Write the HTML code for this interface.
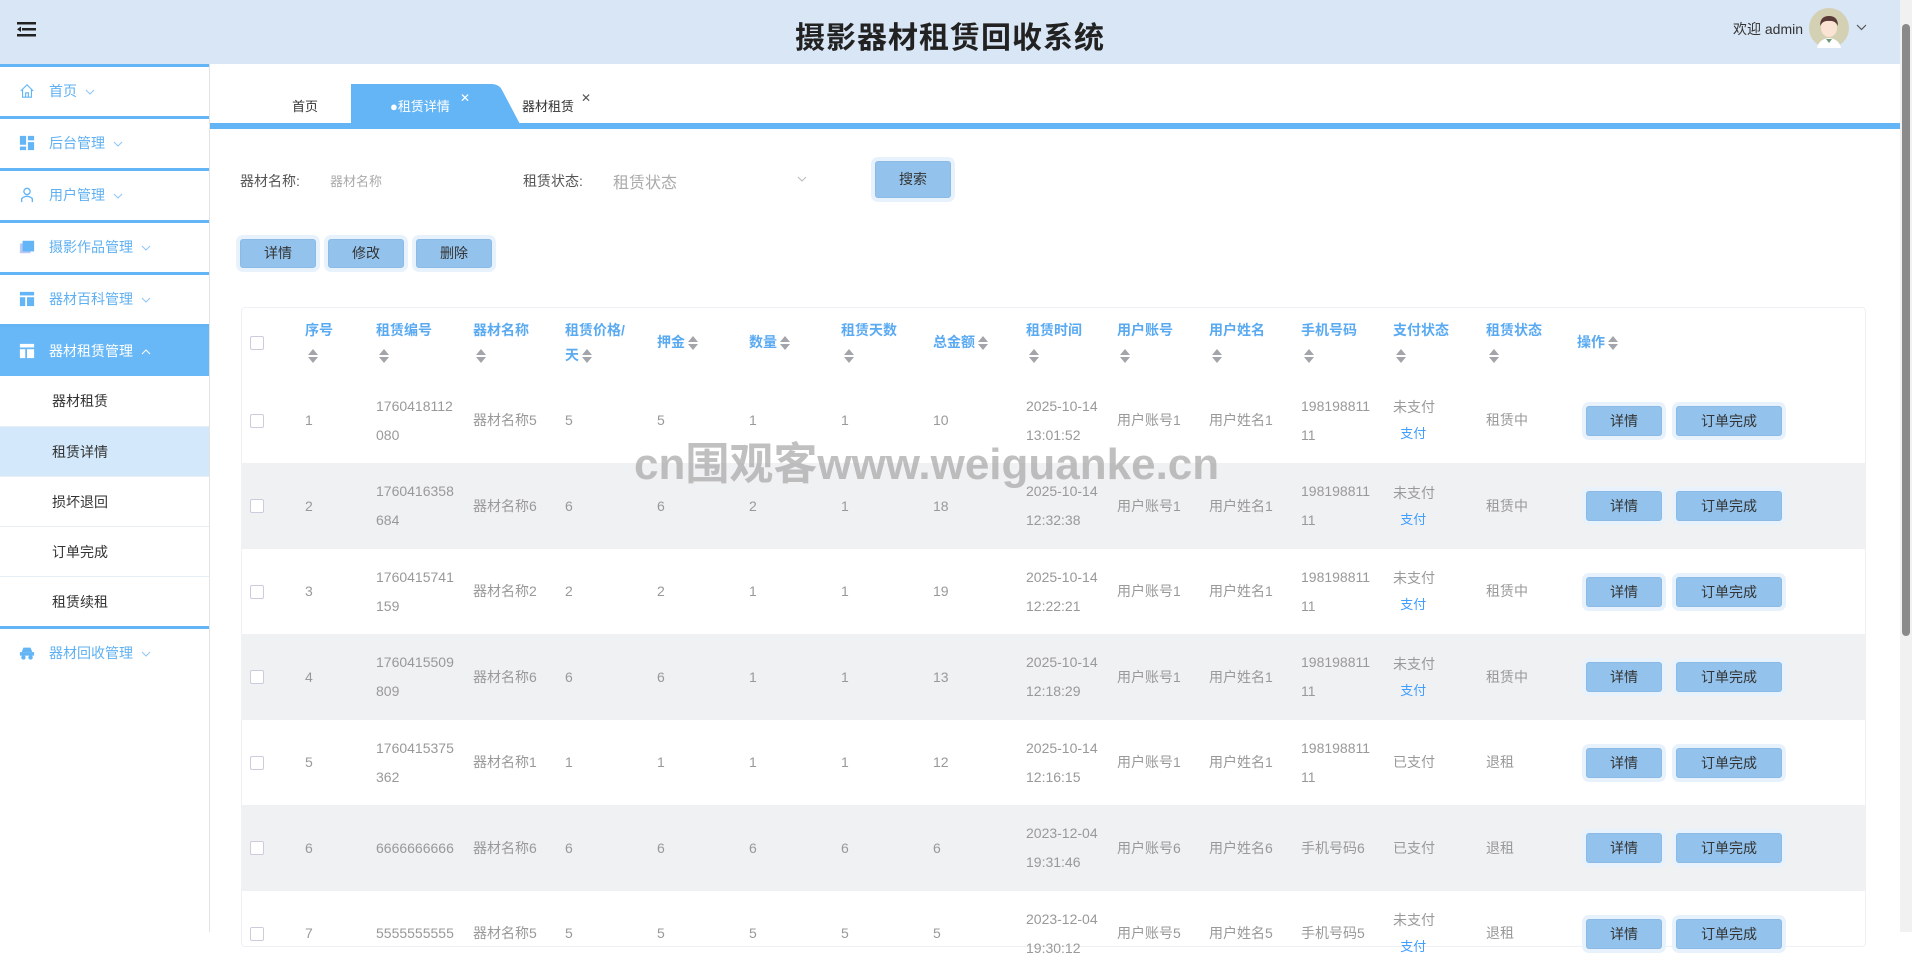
<!DOCTYPE html>
<html><head><meta charset="utf-8">
<style>
*{box-sizing:border-box;margin:0;padding:0}
body{width:1912px;height:932px;overflow:hidden;background:#fff;font-family:"Liberation Sans","Noto Sans CJK SC",sans-serif;position:relative;font-size:14px;color:#333}
.hdr{position:absolute;left:0;top:0;width:1900px;height:64px;background:#d9e6f6}
.title{position:absolute;left:0;width:1900px;top:13px;text-align:center;font-size:30px;font-weight:bold;color:#222;letter-spacing:1px}
.side{position:absolute;left:0;top:64px;width:210px;height:868px;border-right:1px solid #e3e3e3;background:#fff}
.mi{position:absolute;left:0;width:209px;height:52px;border-top:3px solid #64b5f6;color:#5fb0f2;font-size:14px;line-height:49px;padding-left:49px}
.mi .ic{position:absolute;left:18px;top:16px;width:18px;height:16px}
.chev{display:inline-block;margin-left:8px;vertical-align:middle}
.mi.act{background:#68b8f7;color:#fff}
.sub{position:absolute;left:0;width:209px;height:50px;border-top:1px solid #e6eef6;line-height:50px;padding-left:52px;font-size:14px;color:#333}
.bline{position:absolute;left:210px;top:123px;width:1690px;height:6px;background:#64b5f6}
.lbl{position:absolute;font-size:14px;color:#555}
.ph{position:absolute;font-size:14px;color:#aaa}
.btn{position:absolute;background:#93c3ec;border:1px solid #8bbbe5;box-shadow:0 0 0 4px #e8f2fc;border-radius:3px;text-align:center;color:#333;font-size:14px}
.card{position:absolute;left:241px;top:307px;width:1625px;height:640px;border:1px solid #eef0f4;border-radius:4px}
.row{position:absolute;left:241px;width:1625px;display:grid;grid-template-columns:64px 71px 97px 92px 92px 92px 92px 92px 93px 91px 92px 92px 92px 93px 91px 280px;align-items:center;font-size:14px;color:#999;line-height:29px}
.row.g{background:#f0f1f3}
.hd{color:#5aaaf2;font-weight:bold;font-size:14px;line-height:25px}
.cb{width:14px;height:14px;border:1px solid #ccd;border-radius:2px;background:#fff;margin-left:9px}
.s{display:inline-block;width:10px;height:14px;position:relative;vertical-align:middle;margin-left:3px}
.s:before,.s:after{content:"";position:absolute;left:0;border-left:5px solid transparent;border-right:5px solid transparent}
.s:before{top:0;border-bottom:6px solid #a3a5aa}
.s:after{top:8px;border-top:6px solid #a3a5aa}
.ob{display:inline-block;height:30px;line-height:28px;background:#93c3ec;border:1px solid #8bbbe5;box-shadow:0 0 0 4px #e8f2fc;border-radius:3px;color:#333;text-align:center;font-size:14px;vertical-align:middle}
.pay{color:#409eff;font-size:13px}
.wm{position:absolute;left:634px;top:428px;font-size:44px;font-weight:bold;color:rgba(165,165,165,.7);white-space:nowrap}
</style></head><body>
<div class="hdr">
 <svg style="position:absolute;left:17px;top:22px" width="19" height="15" viewBox="0 0 19 15"><rect x="0" y="0" width="19" height="2.5" fill="#222"/><rect x="5" y="6" width="14" height="2.5" fill="#222"/><rect x="0" y="12" width="19" height="2.5" fill="#222"/><path d="M4 4.5 L0 7.25 L4 10z" fill="#222"/></svg>
 <div class="title">摄影器材租赁回收系统</div>
 <div style="position:absolute;left:1733px;top:19px;font-size:14px;color:#333">欢迎 admin</div>
 <svg style="position:absolute;left:1809px;top:8px" width="40" height="40" viewBox="0 0 40 40"><circle cx="20" cy="20" r="20" fill="#d4d0b4"/><path d="M8 40 Q10 31 20 30 Q30 31 32 40z" fill="#fff"/><path d="M17 31 L20 35 L23 31z" fill="#6a9a7e"/><ellipse cx="20" cy="20" rx="8" ry="9" fill="#fbe3d3"/><path d="M11 18 Q11 8 20 8 Q29 8 29 18 Q26 12 20 13 Q14 12 11 18z" fill="#5a3a36"/></svg>
 <svg style="position:absolute;left:1856px;top:24px" width="11" height="7" viewBox="0 0 11 7"><path d="M1 1 L5.5 5.5 L10 1" fill="none" stroke="#555" stroke-width="1.2"/></svg>
</div>
<div style="position:absolute;left:1900px;top:0;width:12px;height:932px;background:#f1f1f1"></div>
<div style="position:absolute;left:1902px;top:24px;width:8px;height:612px;background:#8a8a8a;border-radius:4px"></div>

<div class="side">
 <div class="mi" style="top:0">
  <svg class="ic" viewBox="0 0 18 18"><path d="M2 9 L9 2 L16 9 M4 7 V16 H14 V7 M7.5 16 V11 H10.5 V16" fill="none" stroke="#64b5f6" stroke-width="1.3"/></svg>首页<svg class="chev" width="10" height="6" viewBox="0 0 10 6"><path d="M1 1 L5 5 L9 1" fill="none" stroke="#8ec5f3" stroke-width="1"/></svg></div>
 <div class="mi" style="top:52px">
  <svg class="ic" viewBox="0 0 18 18"><rect x="1" y="1" width="7" height="10" fill="#64b5f6"/><rect x="10" y="1" width="7" height="5" fill="#64b5f6"/><rect x="1" y="13" width="7" height="4" fill="#64b5f6"/><rect x="10" y="8" width="7" height="9" fill="#64b5f6"/></svg>后台管理<svg class="chev" width="10" height="6" viewBox="0 0 10 6"><path d="M1 1 L5 5 L9 1" fill="none" stroke="#8ec5f3" stroke-width="1"/></svg></div>
 <div class="mi" style="top:104px">
  <svg class="ic" viewBox="0 0 18 18"><circle cx="9" cy="5" r="3.5" fill="none" stroke="#64b5f6" stroke-width="1.5"/><path d="M3 17 V13 Q9 8 15 13 V17" fill="none" stroke="#64b5f6" stroke-width="1.5"/></svg>用户管理<svg class="chev" width="10" height="6" viewBox="0 0 10 6"><path d="M1 1 L5 5 L9 1" fill="none" stroke="#8ec5f3" stroke-width="1"/></svg></div>
 <div class="mi" style="top:156px">
  <svg class="ic" viewBox="0 0 18 18"><rect x="1" y="5" width="12" height="11" fill="#b9c8f5"/><rect x="4" y="2" width="13" height="12" fill="#64b5f6"/></svg>摄影作品管理<svg class="chev" width="10" height="6" viewBox="0 0 10 6"><path d="M1 1 L5 5 L9 1" fill="none" stroke="#8ec5f3" stroke-width="1"/></svg></div>
 <div class="mi" style="top:208px">
  <svg class="ic" viewBox="0 0 18 18"><rect x="1" y="1" width="16" height="4" fill="#64b5f6"/><rect x="1" y="7" width="6" height="10" fill="#64b5f6"/><rect x="9" y="7" width="8" height="10" fill="#64b5f6"/></svg>器材百科管理<svg class="chev" width="10" height="6" viewBox="0 0 10 6"><path d="M1 1 L5 5 L9 1" fill="none" stroke="#8ec5f3" stroke-width="1"/></svg></div>
 <div class="mi act" style="top:260px">
  <svg class="ic" viewBox="0 0 18 18"><rect x="1" y="1" width="16" height="4" fill="#fff"/><rect x="1" y="7" width="6" height="10" fill="#fff"/><rect x="9" y="7" width="8" height="10" fill="#fff"/></svg>器材租赁管理<svg class="chev" width="10" height="6" viewBox="0 0 10 6"><path d="M1 5 L5 1 L9 5" fill="none" stroke="#fff" stroke-width="1"/></svg></div>
 <div class="sub" style="top:312px;border-top:none">器材租赁</div>
 <div class="sub" style="top:362px;background:#d3e8fb">租赁详情</div>
 <div class="sub" style="top:412px">损坏退回</div>
 <div class="sub" style="top:462px">订单完成</div>
 <div class="sub" style="top:512px">租赁续租</div>
 <div class="mi" style="top:562px">
  <svg class="ic" viewBox="0 0 18 18"><path d="M3 8 L5 3 H13 L15 8z" fill="#64b5f6"/><rect x="1" y="8" width="16" height="4" fill="#64b5f6"/><circle cx="5" cy="14" r="2.5" fill="#64b5f6"/><circle cx="13" cy="14" r="2.5" fill="#64b5f6"/></svg>器材回收管理<svg class="chev" width="10" height="6" viewBox="0 0 10 6"><path d="M1 1 L5 5 L9 1" fill="none" stroke="#8ec5f3" stroke-width="1"/></svg></div>
</div>

<div class="bline"></div>
<div style="position:absolute;left:292px;top:96px;font-size:13px;color:#333">首页</div>
<svg style="position:absolute;left:351px;top:84px" width="175" height="42" viewBox="0 0 175 42"><path d="M0 0 H140 Q148 0 151 6 L170 42 H0z" fill="#64b5f6"/></svg>
<div style="position:absolute;left:390px;top:96px;font-size:13px;color:#fff">●租赁详情</div>
<div style="position:absolute;left:460px;top:91px;font-size:12px;color:#fff">✕</div>
<div style="position:absolute;left:522px;top:96px;font-size:13px;color:#333">器材租赁</div>
<div style="position:absolute;left:581px;top:91px;font-size:12px;color:#555">✕</div>

<div class="lbl" style="left:240px;top:171px">器材名称:</div>
<div class="ph" style="left:330px;top:171px;font-size:13px">器材名称</div>
<div class="lbl" style="left:523px;top:171px">租赁状态:</div>
<div class="ph" style="left:613px;top:169px;font-size:16px;color:#aaa">租赁状态</div>
<svg style="position:absolute;left:797px;top:176px" width="10" height="6" viewBox="0 0 10 6"><path d="M1 1 L5 5 L9 1" fill="none" stroke="#bbb" stroke-width="1"/></svg>
<div class="btn" style="left:875px;top:161px;width:76px;height:37px;line-height:35px">搜索</div>
<div class="btn" style="left:240px;top:239px;width:76px;height:29px;line-height:27px">详情</div>
<div class="btn" style="left:328px;top:239px;width:76px;height:29px;line-height:27px">修改</div>
<div class="btn" style="left:416px;top:239px;width:76px;height:29px;line-height:27px">删除</div>

<div class="card"></div>
<div class="row hd" style="top:307px;height:71px">
 <div><div class="cb"></div></div>
 <div>序号<br><span class="s"></span></div>
 <div>租赁编号<br><span class="s"></span></div>
 <div>器材名称<br><span class="s"></span></div>
 <div>租赁价格/<br>天<span class="s"></span></div>
 <div>押金<span class="s"></span></div>
 <div>数量<span class="s"></span></div>
 <div>租赁天数<br><span class="s"></span></div>
 <div>总金额<span class="s"></span></div>
 <div>租赁时间<br><span class="s"></span></div>
 <div>用户账号<br><span class="s"></span></div>
 <div>用户姓名<br><span class="s"></span></div>
 <div>手机号码<br><span class="s"></span></div>
 <div>支付状态<br><span class="s"></span></div>
 <div>租赁状态<br><span class="s"></span></div>
 <div>操作<span class="s"></span></div>
</div>

<div class="row" style="top:378px;height:85px"><div><div class="cb"></div></div><div>1</div><div>1760418112<br>080</div><div>器材名称5</div><div>5</div><div>5</div><div>1</div><div>1</div><div>10</div><div>2025-10-14<br>13:01:52</div><div>用户账号1</div><div>用户姓名1</div><div>198198811<br>11</div><div style="text-align:left;line-height:26px">未支付<br><span class="pay">&nbsp;&nbsp;支付</span></div><div>租赁中</div><div><span class="ob" style="width:76px;margin-left:9px">详情</span><span class="ob" style="width:106px;margin-left:14px">订单完成</span></div></div>
<div class="row g" style="top:463px;height:86px"><div><div class="cb"></div></div><div>2</div><div>1760416358<br>684</div><div>器材名称6</div><div>6</div><div>6</div><div>2</div><div>1</div><div>18</div><div>2025-10-14<br>12:32:38</div><div>用户账号1</div><div>用户姓名1</div><div>198198811<br>11</div><div style="line-height:26px">未支付<br><span class="pay">&nbsp;&nbsp;支付</span></div><div>租赁中</div><div><span class="ob" style="width:76px;margin-left:9px">详情</span><span class="ob" style="width:106px;margin-left:14px">订单完成</span></div></div>
<div class="row" style="top:549px;height:85px"><div><div class="cb"></div></div><div>3</div><div>1760415741<br>159</div><div>器材名称2</div><div>2</div><div>2</div><div>1</div><div>1</div><div>19</div><div>2025-10-14<br>12:22:21</div><div>用户账号1</div><div>用户姓名1</div><div>198198811<br>11</div><div style="line-height:26px">未支付<br><span class="pay">&nbsp;&nbsp;支付</span></div><div>租赁中</div><div><span class="ob" style="width:76px;margin-left:9px">详情</span><span class="ob" style="width:106px;margin-left:14px">订单完成</span></div></div>
<div class="row g" style="top:634px;height:86px"><div><div class="cb"></div></div><div>4</div><div>1760415509<br>809</div><div>器材名称6</div><div>6</div><div>6</div><div>1</div><div>1</div><div>13</div><div>2025-10-14<br>12:18:29</div><div>用户账号1</div><div>用户姓名1</div><div>198198811<br>11</div><div style="line-height:26px">未支付<br><span class="pay">&nbsp;&nbsp;支付</span></div><div>租赁中</div><div><span class="ob" style="width:76px;margin-left:9px">详情</span><span class="ob" style="width:106px;margin-left:14px">订单完成</span></div></div>
<div class="row" style="top:720px;height:85px"><div><div class="cb"></div></div><div>5</div><div>1760415375<br>362</div><div>器材名称1</div><div>1</div><div>1</div><div>1</div><div>1</div><div>12</div><div>2025-10-14<br>12:16:15</div><div>用户账号1</div><div>用户姓名1</div><div>198198811<br>11</div><div>已支付</div><div>退租</div><div><span class="ob" style="width:76px;margin-left:9px">详情</span><span class="ob" style="width:106px;margin-left:14px">订单完成</span></div></div>
<div class="row g" style="top:805px;height:86px"><div><div class="cb"></div></div><div>6</div><div>6666666666</div><div>器材名称6</div><div>6</div><div>6</div><div>6</div><div>6</div><div>6</div><div>2023-12-04<br>19:31:46</div><div>用户账号6</div><div>用户姓名6</div><div>手机号码6</div><div>已支付</div><div>退租</div><div><span class="ob" style="width:76px;margin-left:9px">详情</span><span class="ob" style="width:106px;margin-left:14px">订单完成</span></div></div>
<div class="row" style="top:891px;height:85px"><div><div class="cb"></div></div><div>7</div><div>5555555555</div><div>器材名称5</div><div>5</div><div>5</div><div>5</div><div>5</div><div>5</div><div>2023-12-04<br>19:30:12</div><div>用户账号5</div><div>用户姓名5</div><div>手机号码5</div><div style="line-height:26px">未支付<br><span class="pay">&nbsp;&nbsp;支付</span></div><div>退租</div><div><span class="ob" style="width:76px;margin-left:9px">详情</span><span class="ob" style="width:106px;margin-left:14px">订单完成</span></div></div>

<div class="wm">cn围观客www.weiguanke.cn</div>
</body></html>
